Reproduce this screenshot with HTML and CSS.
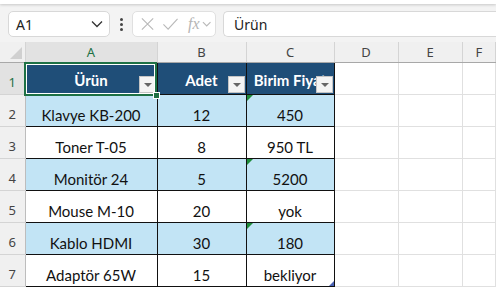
FILE: index.html
```html
<!DOCTYPE html>
<html lang="tr">
<head>
    <meta charset="UTF-8">
    <title>Sheet</title>
    <link rel="stylesheet" href="styles.css">
</head>
<body>
    <div class="ribbon-edge"></div>

    <div class="formula-bar">
        <div class="name-box">
            <span>A1</span>
            <svg width="12" height="8" viewBox="0 0 12 8"><path d="M1 1.5 L6 6.5 L11 1.5" fill="none" stroke="#333" stroke-width="1.3"/></svg>
        </div>
        <div class="more">
            <i></i><i></i><i></i>
        </div>
        <div class="fx-box">
            <svg width="16" height="16" viewBox="0 0 16 16"><path d="M2 2 L14 14 M14 2 L2 14" stroke="#b9b9b9" stroke-width="1.2"/></svg>
            <svg width="18" height="16" viewBox="0 0 18 16"><path d="M1.5 8.5 L6.5 13.5 L16.5 2.5" fill="none" stroke="#b9b9b9" stroke-width="1.2"/></svg>
            <span class="fx">fx</span>
            <svg width="10" height="8" viewBox="0 0 10 8"><path d="M1 2 L5 6 L9 2" fill="none" stroke="#b9b9b9" stroke-width="1.2"/></svg>
        </div>
        <div class="formula-input">Ürün</div>
    </div>

    <div class="sheet">
        <table class="grid">
            <colgroup>
                <col class="c-row"><col class="c-a"><col class="c-b"><col class="c-c"><col class="c-d"><col class="c-e"><col>
            </colgroup>
            <tr class="col-heads">
                <th class="corner"><span class="corner-tri"></span></th>
                <th class="sel">A</th>
                <th>B</th>
                <th>C</th>
                <th>D</th>
                <th>E</th>
                <th>F</th>
            </tr>
            <tr>
                <th class="row-head sel">1</th>
                <td class="hd">Ürün<span class="filter"></span></td>
                <td class="hd">Adet<span class="filter"></span></td>
                <td class="hd">Birim Fiyat<span class="filter"></span></td>
                <td class="empty"></td><td class="empty"></td><td class="empty"></td>
            </tr>
            <tr class="band">
                <th class="row-head">2</th>
                <td>Klavye KB-200</td><td>12</td><td class="warn">450</td>
                <td class="empty"></td><td class="empty"></td><td class="empty"></td>
            </tr>
            <tr>
                <th class="row-head">3</th>
                <td>Toner T-05</td><td>8</td><td>950 TL</td>
                <td class="empty"></td><td class="empty"></td><td class="empty"></td>
            </tr>
            <tr class="band">
                <th class="row-head">4</th>
                <td>Monitör 24</td><td>5</td><td class="warn">5200</td>
                <td class="empty"></td><td class="empty"></td><td class="empty"></td>
            </tr>
            <tr>
                <th class="row-head">5</th>
                <td>Mouse M-10</td><td>20</td><td>yok</td>
                <td class="empty"></td><td class="empty"></td><td class="empty"></td>
            </tr>
            <tr class="band">
                <th class="row-head">6</th>
                <td>Kablo HDMI</td><td>30</td><td class="warn">180</td>
                <td class="empty"></td><td class="empty"></td><td class="empty"></td>
            </tr>
            <tr>
                <th class="row-head">7</th>
                <td>Adaptör 65W</td><td>15</td><td class="last">bekliyor<span class="resize"></span></td>
                <td class="empty"></td><td class="empty"></td><td class="empty"></td>
            </tr>
        </table>
        <div class="selection"><span class="handle"></span></div>
    </div>
</body>
</html>
```

FILE: styles.css
```css
body {
    margin: 0;
    background: #f3f3f3;
    font-family: "Noto Sans", "Open Sans", sans-serif;
    overflow: hidden;
}

.ribbon-edge {
    height: 4px;
    background: #fff;
    box-shadow: 0 1px 3px rgba(0, 0, 0, 0.18);
}

/* formula bar */
.formula-bar {
    display: flex;
    align-items: center;
    height: 26px;
    padding: 7px 0 0 8px;
}

.name-box {
    display: flex;
    align-items: center;
    justify-content: space-between;
    box-sizing: border-box;
    width: 102px;
    height: 26px;
    padding: 0 6px 0 7px;
    background: #fff;
    border: 1px solid #d8d8d8;
    border-radius: 5px;
    font-size: 14px;
    color: #222;
}

.more {
    display: flex;
    flex-direction: column;
    gap: 2px;
    width: 22px;
    align-items: center;
}

.more i {
    width: 3px;
    height: 3px;
    border-radius: 50%;
    background: #444;
}

.fx-box {
    display: flex;
    align-items: center;
    gap: 7px;
    box-sizing: border-box;
    width: 84px;
    height: 26px;
    padding: 0 4px 0 7px;
    background: #fff;
    border: 1px solid #e0e0e0;
    border-radius: 5px;
}

.fx {
    font-family: "Liberation Serif", serif;
    font-style: italic;
    font-size: 16px;
    color: #b5b5b5;
    margin-left: 2px;
    margin-right: -5px;
}

.formula-input {
    flex: 1;
    box-sizing: border-box;
    height: 26px;
    margin-left: 7px;
    padding: 3px 10px;
    background: #fff;
    border: 1px solid #d8d8d8;
    border-right: none;
    border-radius: 5px 0 0 5px;
    font-size: 14px;
    color: #222;
}

/* sheet */
.sheet {
    position: relative;
    margin-top: 5px;
    background: #fff;
}

.grid {
    border-collapse: collapse;
    table-layout: fixed;
    width: 100%;
    font-family: Lato, "Liberation Sans", sans-serif;
    font-size: 15px;
    color: #111;
}

.c-row { width: 25px; }
.c-a { width: 132px; }
.c-b { width: 89px; }
.c-c { width: 88px; }
.c-d { width: 64px; }
.c-e { width: 64px; }

.col-heads th {
    height: 20px;
    padding: 0;
    background: #f0f0f0;
    border-right: 1px solid #d4d4d4;
    border-bottom: 1px solid #a8a8a8;
    font-family: "Noto Sans", sans-serif;
    font-weight: normal;
    font-size: 13px;
    color: #444;
}

.col-heads th.sel {
    background: #e2e2e2;
    color: #1e7145;
}

.corner {
    position: relative;
}

.corner-tri {
    position: absolute;
    right: 3px;
    bottom: 3px;
    width: 0;
    height: 0;
    border-left: 12px solid transparent;
    border-bottom: 12px solid #d0d0d0;
}

.row-head {
    box-sizing: border-box;
    height: 32px;
    padding: 0 0 3px;
    background: #f0f0f0;
    border-right: 1px solid #bdbdbd;
    border-bottom: 1px solid #d4d4d4;
    vertical-align: bottom;
    font-family: "Noto Sans", sans-serif;
    font-weight: normal;
    font-size: 13px;
    line-height: 18px;
    color: #444;
}

.row-head.sel {
    background: #e2e2e2;
    color: #1e7145;
}

td {
    position: relative;
    padding: 0 2px 1px;
    border: 1px solid #111;
    vertical-align: bottom;
    text-align: center;
    white-space: nowrap;
    overflow: hidden;
    line-height: 20px;
}

td.empty {
    border: 1px solid #e0e0e0;
    border-top: none;
}

td.hd {
    background: #1f4e78;
    color: #fff;
    font-weight: bold;
    padding-bottom: 4px;
}

.band td:not(.empty) {
    background: #c2e4f5;
}

.filter {
    position: absolute;
    right: 1px;
    bottom: 1px;
    box-sizing: border-box;
    width: 17px;
    height: 17px;
    background: #f4f4f4;
    border: 1px solid #c4c4c4;
}

.filter::after {
    content: "";
    position: absolute;
    left: 4px;
    top: 6px;
    border-left: 4px solid transparent;
    border-right: 4px solid transparent;
    border-top: 4px solid #666;
}

.warn::before {
    content: "";
    position: absolute;
    left: 0;
    top: 0;
    border-top: 6px solid #1e8c3a;
    border-right: 6px solid transparent;
}

.resize {
    position: absolute;
    right: 0;
    bottom: 0;
    border-bottom: 5px solid #4a62b5;
    border-left: 5px solid transparent;
}

/* active cell */
.selection {
    position: absolute;
    left: 24px;
    top: 20px;
    width: 129px;
    height: 30px;
    border: 2px solid #1e7145;
    outline: 1px solid #fff;
    outline-offset: -3px;
}

.handle {
    position: absolute;
    right: -5px;
    bottom: -5px;
    width: 5px;
    height: 5px;
    background: #1e7145;
    border: 1px solid #fff;
}
```
